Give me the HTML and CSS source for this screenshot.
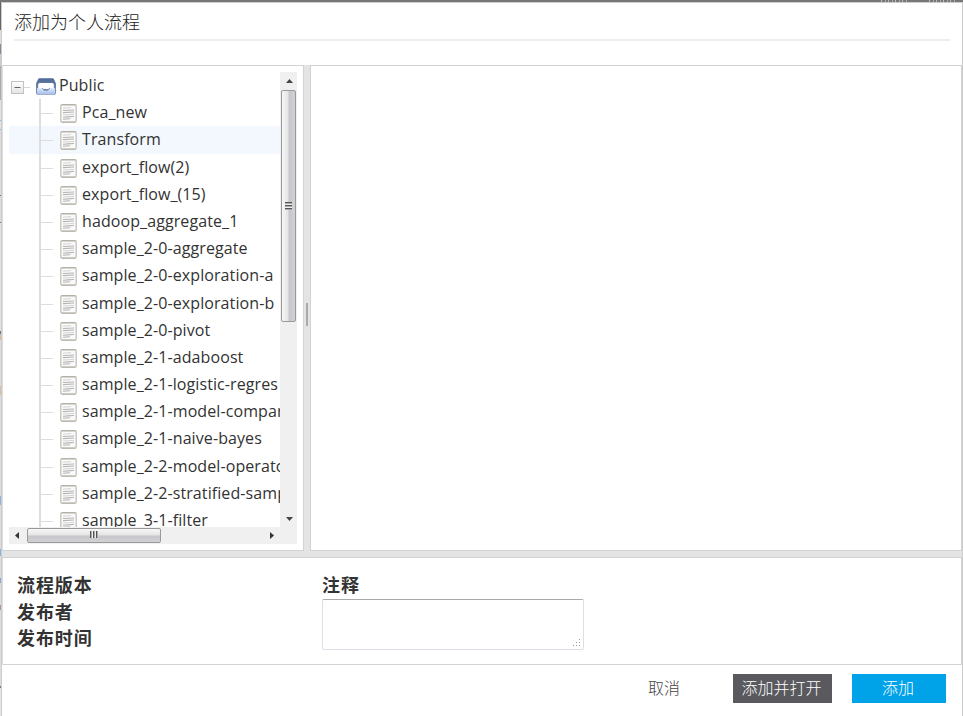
FILE: index.html
```html
<!DOCTYPE html>
<html lang="zh-CN">
<head>
<meta charset="utf-8">
<title>添加为个人流程</title>
<link rel="stylesheet" href="styles.css">
</head>
<body>
<svg class="defs" aria-hidden="true">
  <linearGradient id="tray" x1="0" y1="0" x2="0" y2="1"><stop offset="0" stop-color="#4d6894"/><stop offset=".6" stop-color="#7188ae"/><stop offset="1" stop-color="#8299bf"/></linearGradient>
  <linearGradient id="front" x1="0" y1="0" x2="0" y2="1"><stop offset="0" stop-color="#dce7fa"/><stop offset="1" stop-color="#a9c2ea"/></linearGradient>
  <linearGradient id="box" x1="0" y1="0" x2="0" y2="1"><stop offset="0" stop-color="#fff"/><stop offset="1" stop-color="#e4e4e4"/></linearGradient>
  <symbol id="doc" viewBox="0 0 17 19">
    <rect x=".8" y=".8" width="15.4" height="17.2" rx="1.2" fill="#fafafa" stroke="#cbc8c0" stroke-width="1.5"/>
    <path d="M1.500.6h14M1.500 18.300h14" stroke="#b5b2a6" stroke-width="1.100"/>
    <path d="M3 4.200l8-.6M3 11l11-.6" stroke="#d4d4d4"/>
    <path d="M3 6.500l11-.5M3 8.600l11-.6M3 13.200l8-.5 3-.4M3 15.200l7-.5" stroke="#b4b4b4" stroke-width="1.100"/>
  </symbol>
</svg>
<div class="screen">
  <div class="backdrop-top"><i></i><i></i></div>
  <div class="backdrop-left"></div>
  <main class="dialog">
    <header class="title">添加为个人流程</header>
    <section class="split">
      <div class="tree-panel">
        <div class="viewport">
          <div class="root row">
            <svg class="toggle" viewBox="0 0 19 13"><path d="M13 6.5h6" stroke="#d6d6d6"/><rect x=".5" y=".5" width="12" height="12" fill="url(#box)" stroke="#c2c2c2"/><path d="M3.500 6.500h6" stroke="#666"/></svg>
            <svg class="tray" viewBox="0 0 20 17"><path d="M3.500.3h13q.8 0 1.300.8L20 5.500V15q0 1.700-1.600 1.700H1.600Q0 16.700 0 15V5.500L2.200 1.100Q2.700.3 3.500.3z" fill="url(#tray)"/><path d="M3.500 5h13l1.300 1v5H2.200V6z" fill="#fff"/><path d="M1 10.300h5q1 0 1.300 1 .3.900 1.200.9h3q.9 0 1.200-.9.300-1 1.300-1h5V15q0 .9-.8.9H1.800Q1 15.900 1 15z" fill="url(#front)"/><path d="M6 10.300q1 0 1.300 1 .3.900 1.200.9h3q.9 0 1.200-.9.300-1 1.300-1" stroke="#7187a8" fill="none"/></svg>
            <span>Public</span>
          </div>
          <ul class="children">
            <li class="row"><svg class="doc"><use href="#doc"/></svg>Pca_new</li>
            <li class="row selected"><svg class="doc"><use href="#doc"/></svg>Transform</li>
            <li class="row"><svg class="doc"><use href="#doc"/></svg>export_flow(2)</li>
            <li class="row"><svg class="doc"><use href="#doc"/></svg>export_flow_(15)</li>
            <li class="row"><svg class="doc"><use href="#doc"/></svg>hadoop_aggregate_1</li>
            <li class="row"><svg class="doc"><use href="#doc"/></svg>sample_2-0-aggregate</li>
            <li class="row"><svg class="doc"><use href="#doc"/></svg>sample_2-0-exploration-a</li>
            <li class="row"><svg class="doc"><use href="#doc"/></svg>sample_2-0-exploration-b</li>
            <li class="row"><svg class="doc"><use href="#doc"/></svg>sample_2-0-pivot</li>
            <li class="row"><svg class="doc"><use href="#doc"/></svg>sample_2-1-adaboost</li>
            <li class="row"><svg class="doc"><use href="#doc"/></svg>sample_2-1-logistic-regres</li>
            <li class="row"><svg class="doc"><use href="#doc"/></svg>sample_2-1-model-compar</li>
            <li class="row"><svg class="doc"><use href="#doc"/></svg>sample_2-1-naive-bayes</li>
            <li class="row"><svg class="doc"><use href="#doc"/></svg>sample_2-2-model-operato</li>
            <li class="row"><svg class="doc"><use href="#doc"/></svg>sample_2-2-stratified-samp</li>
            <li class="row"><svg class="doc"><use href="#doc"/></svg>sample_3-1-filter</li>
          </ul>
        </div>
        <div class="vbar">
          <svg class="arrow-v" viewBox="0 0 7 4"><path d="M0 4L3.500 0L7 4z" fill="#444"/></svg>
          <div class="vthumb"><i></i></div>
          <svg class="arrow-v" viewBox="0 0 7 4"><path d="M0 0h7L3.500 4z" fill="#444"/></svg>
        </div>
        <div class="hbar">
          <svg class="arrow-h" viewBox="0 0 4 7"><path d="M4 0v7L0 3.500z" fill="#333"/></svg>
          <div class="hthumb"><i></i></div>
          <svg class="arrow-h end" viewBox="0 0 4 7"><path d="M0 0v7L4 3.500z" fill="#333"/></svg>
        </div>
        <div class="corner"></div>
      </div>
      <div class="splitter"><i></i></div>
      <div class="preview"></div>
    </section>
    <section class="details">
      <div class="labels"><b>流程版本</b><b>发布者</b><b>发布时间</b></div>
      <div class="note"><b>注释</b>
        <div class="textbox"><svg class="grip" viewBox="0 0 8 8"><path d="M6 0h1v1h-1zM3 3h1v1H3zM6 3h1v1H6zM0 6h1v1H0zM3 6h1v1H3zM6 6h1v1H6z" fill="#999"/></svg></div>
      </div>
    </section>
    <footer class="actions">
      <span class="cancel">取消</span>
      <span class="button dark">添加并打开</span>
      <span class="button primary">添加</span>
    </footer>
  </main>
</div>
</body>
</html>
```

FILE: styles.css
```css
* { box-sizing: border-box; }
body { margin: 0; color: #333; font: 16px "Open Sans", "Noto Sans CJK SC", sans-serif; overflow: hidden; }
.defs { position: absolute; width: 0; height: 0; }
.screen { width: 963px; height: 716px; display: grid; grid-template: 2px 714px / 1px 962px; }
.backdrop-top { grid-column: 1 / 3; background: #777; display: flex; justify-content: flex-end; gap: 20px; padding-right: 6px; }
.backdrop-top i { width: 28px; height: 2px; background: repeating-linear-gradient(90deg, #bbb 0 1px, #777 1px 4px, #aaa 4px 5px, #777 5px 7px); }
.backdrop-left { background: linear-gradient(#666 0 28px, #ddd 28px 42px, #889 42px 52px, #ccc 52px 64px, #aaa 64px 98px, #e2e2e2 98px 118px, #6ac5ee 118px 119px, #e2e2e2 119px 127px, #6ac5ee 127px 128px, #ddd 128px 193px, #777 193px 194px, #ddd 194px 220px, #777 220px 221px, #e2e2e2 221px 329px, #778 329px 332px, #dbbd9b 332px 338px, #ddd 338px 384px, #dbbd9b 384px 393px, #ddd 393px 494px, #8fb3da 494px 503px, #ddd 503px 547px, #8fb3da 547px 554px, #ddd 554px 576px, #89aad8 576px 581px, #ddd 581px 603px, #b69390 603px 608px, #ddd 608px 684px, #778 684px 686px, #e6e6e6 686px); }
.dialog { display: flex; flex-direction: column; border: solid #ccc; border-width: 1px 1px 0; background: #fff; }
.title { height: 38px; margin: 0 12px; border-bottom: 2px solid #eee; color: #222; font-size: 18px; line-height: 38px; font-weight: 300; }
.split { display: flex; height: 486px; margin-top: 24px; background: #e4e4e4; }
.tree-panel { width: 302px; border: 1px solid #d2d2d2; border-left-color: #ddd; background: #fff; padding: 6px; display: grid; grid-template: 455px 17px / 271px 17px; }
.viewport { overflow: hidden; }
.row { display: flex; align-items: center; height: 27.2px; white-space: nowrap; line-height: 27px; padding-bottom: .2px; letter-spacing: .09px; }
.toggle { width: 19px; height: 13px; margin: 3px 6px 0 2px; flex: none; }
.tray { width: 20px; height: 17px; margin: 1px 3px 0 0; flex: none; }
.children { margin: 0; padding: 0; list-style: none; }
.children .row { padding-left: 31px; background: linear-gradient(#ddd, #ddd) 30px 0 / 2px 100% no-repeat, linear-gradient(#ddd, #ddd) 32px 14px / 12px 1px no-repeat; }
.children .selected { background-color: #f2f8fd; }
.doc { width: 17px; height: 19px; margin: 2px 5px 0 20px; flex: none; }
.vbar { background: #f0f0f0; display: flex; flex-direction: column; align-items: flex-start; padding: 7px 0 6px 1px; }
.arrow-v { width: 7px; height: 4px; margin-left: 5px; flex: none; }
.vthumb { width: 15px; height: 232px; margin: 7px 0 auto; border: 1px solid #999; border-radius: 2px; background: linear-gradient(90deg, #f7f7f7, #e5e5e7 45%, #c6c6cb 55%, #d2d2d6); display: grid; place-items: center; }
.vthumb i { width: 7px; height: 8px; margin-right: 1px; background: repeating-linear-gradient(#555 0 1px, #aaa 1px 2px, #eee 2px 3px); }
.hbar { background: #f0f0f0; display: flex; align-items: flex-start; padding-left: 6px; }
.arrow-h { width: 4px; height: 7px; margin-top: 5px; flex: none; }
.arrow-h.end { margin-left: auto; margin-right: 6px; }
.hthumb { width: 134px; height: 15px; margin: 1px 0 0 8px; border: 1px solid #999; border-radius: 2px; background: linear-gradient(#f7f7f7, #e5e5e7 45%, #c6c6cb 55%, #d2d2d6); display: grid; place-items: center; }
.hthumb i { width: 8px; height: 7px; margin-bottom: 2px; background: repeating-linear-gradient(90deg, #555 0 1px, #aaa 1px 2px, #eee 2px 3px); }
.corner { background: #f0f0f0; }
.splitter { width: 6px; display: flex; align-items: center; justify-content: center; }
.splitter i { width: 2px; height: 23px; margin-top: 12px; background: #aaa; }
.preview { flex: 1; border: 1px solid #d2d2d2; background: #fff; }
.details { display: flex; height: 114px; border-top: 6px solid #e4e4e4; font-size: 18px; line-height: 26.5px; box-shadow: inset 0 1px #d2d2d2, inset 1px 0 #ddd, inset -1px 0 #d2d2d2, inset 0 -1px #d2d2d2; }
.details b { letter-spacing: .9px; }
.labels { display: flex; flex-direction: column; width: 320px; padding: 15px 0 0 15px; }
.note { padding-top: 15px; }
.note b { display: block; }
.textbox { width: 262px; height: 51px; border: 1px solid #dedfe6; border-top-color: #aaa; border-radius: 2px; display: flex; align-items: flex-end; justify-content: flex-end; padding: 2px; }
.grip { width: 8px; height: 8px; }
.actions { display: flex; justify-content: flex-end; padding: 9px 16px 0 0; line-height: 29px; color: #444; font-weight: 300; }
.cancel { margin-right: 53px; }
.button { height: 29px; color: #fff; text-align: center; padding-right: 2px; }
.dark { width: 99px; background: #59595e; margin-right: 20px; }
.primary { width: 94px; background: #00a2e8; }
```
